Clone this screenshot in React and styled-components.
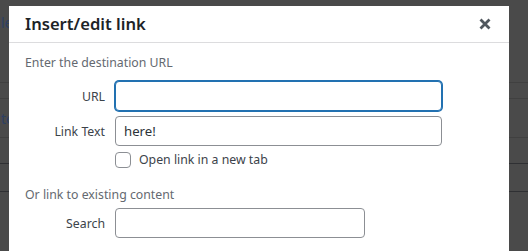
import React from 'react'
import styled, { createGlobalStyle } from 'styled-components'

const GlobalStyle = createGlobalStyle`
  body {
    margin: 0;
    background: #4a4a4a;
    font-family: "Noto Sans", "Open Sans", sans-serif;
  }
`

const Page = styled.div`
  position: relative;
  width: 528px;
  height: 251px;
  overflow: hidden;
  background: #4a4a4a;
`

const BackRow = styled.div`
  height: ${(p) => p.h}px;
  box-sizing: border-box;
  border-bottom: 1px solid ${(p) => (p.dark ? '#2f3033' : '#404040')};
  display: flex;
  align-items: ${(p) => (p.top ? 'flex-start' : 'center')};
  padding-top: ${(p) => p.pt || 0}px;
`

const BackText = styled.span`
  font-size: 14px;
  color: #2d3f63;
  padding-left: 1px;
`

const Modal = styled.div`
  position: absolute;
  left: 9px;
  top: 6px;
  width: 500px;
  height: 270px;
  background: #fff;
  color: #1d2327;
`

const Header = styled.div`
  height: 36px;
  border-bottom: 1px solid #dcdcde;
  display: flex;
  align-items: center;
  justify-content: space-between;
  padding: 0 16px;
`

const Title = styled.h1`
  margin: 0;
  font-size: 16.6px;
  font-weight: 600;
  line-height: 36px;
`

const Close = styled.button`
  border: 0;
  background: none;
  padding: 0;
  width: 16px;
  height: 16px;
  display: flex;
  align-items: center;
  justify-content: center;
  color: #50575e;
`

const Body = styled.div`
  padding: 11px 16px 0;
  font-size: 12.3px;
`

const Section = styled.p`
  margin: 0 0 ${(p) => p.mb}px;
  color: #646970;
  line-height: 18px;
`

const Field = styled.div`
  display: flex;
  align-items: center;
  margin-bottom: 5px;
`

const Label = styled.label`
  width: 80px;
  padding-right: 10px;
  text-align: right;
  color: #3c434a;
`

const Input = styled.input`
  box-sizing: border-box;
  width: ${(p) => p.w}px;
  height: 30px;
  padding: 0 8px;
  border: 1px solid ${(p) => (p.focused ? '#2271b1' : '#8c8f94')};
  box-shadow: ${(p) => (p.focused ? '0 0 0 1px #2271b1' : 'none')};
  border-radius: 4px;
  font: inherit;
  font-size: 13.2px;
  color: #2c3338;
  outline: none;
`

const CheckRow = styled.label`
  display: flex;
  align-items: center;
  gap: 8px;
  margin: 0 0 17px 90px;
  color: #3c434a;
  line-height: 18px;
`

const Box = styled.span`
  box-sizing: border-box;
  width: 16px;
  height: 16px;
  border: 1px solid #8c8f94;
  border-radius: 4px;
  background: #fff;
`

export default function App() {
  return (
    <Page>
      <GlobalStyle />
      <BackRow h={83} top pt={13}>
        <BackText>le</BackText>
      </BackRow>
      <BackRow h={16} />
      <BackRow h={39}>
        <BackText>te</BackText>
      </BackRow>
      <BackRow h={26} dark />
      <BackRow h={28} dark />

      <Modal>
        <Header>
          <Title>Insert/edit link</Title>
          <Close aria-label="Close">
            <svg width="12" height="12" viewBox="0 0 12 12">
              <path d="M1.5 1.5 L10.5 10.5 M10.5 1.5 L1.5 10.5" stroke="currentColor" strokeWidth="2.8" />
            </svg>
          </Close>
        </Header>
        <Body>
          <Section mb={9}>Enter the destination URL</Section>
          <Field>
            <Label>URL</Label>
            <Input w={327} focused />
          </Field>
          <Field>
            <Label>Link Text</Label>
            <Input w={327} defaultValue="here!" />
          </Field>
          <CheckRow>
            <Box />
            Open link in a new tab
          </CheckRow>
          <Section mb={4}>Or link to existing content</Section>
          <Field>
            <Label>Search</Label>
            <Input w={250} />
          </Field>
        </Body>
      </Modal>
    </Page>
  )
}
